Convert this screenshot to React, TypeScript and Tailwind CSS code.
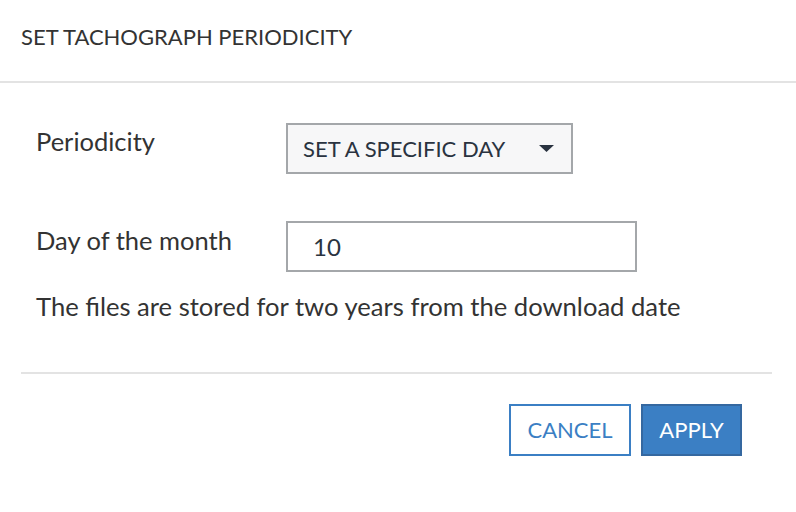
import React from "react";

export default function App() {
  return (
    <div className="w-[796px] h-[512px] bg-white text-[#333] overflow-hidden" style={{ fontFamily: "Lato, 'Open Sans', sans-serif" }}>
      <div className="h-[83px] flex items-center px-[21px] pb-[7px] border-b-2 border-[#e3e3e3]">
        <span className="text-[22px] text-[#333] leading-none">SET TACHOGRAPH PERIODICITY</span>
      </div>
      <div className="px-[21px]">
        <div className="pl-[15px] pt-[40px]">
          <div className="flex items-start">
            <div className="w-[250px] text-[25.5px] leading-[32px] text-[#333] pt-[2px]">Periodicity</div>
            <div className="w-[287px] h-[51px] border-2 border-[#a4a7aa] bg-[#f7f7f8] flex items-center justify-between pl-[15px] pr-[17px]">
              <span className="text-[22px] text-[#2a3340] leading-none">SET A SPECIFIC DAY</span>
              <svg width="15" height="7" viewBox="0 0 15 7"><path d="M0 0 L15 0 L7.5 7 Z" fill="#2a3340" /></svg>
            </div>
          </div>
          <div className="flex items-start mt-[47px]">
            <div className="w-[250px] text-[25.5px] leading-[32px] text-[#333] pt-[3px]">Day of the month</div>
            <div className="w-[351px] h-[51px] border-2 border-[#a4a7aa] bg-white flex items-center pl-[25px]">
              <span className="text-[24px] text-[#2a3340] leading-none">10</span>
            </div>
          </div>
          <div className="mt-[18px] text-[25.6px] leading-[32px] text-[#333]">The files are stored for two years from the download date</div>
        </div>
        <div className="mt-[50px] mr-[3px] border-t-2 border-[#e3e3e3]" />
        <div className="flex justify-end gap-[10px] pr-[33px] pt-[30px]">
          <button className="w-[122px] h-[52px] border-2 border-[#3b7fc4] bg-white text-[#3b7fc4] text-[22px] leading-none">CANCEL</button>
          <button className="w-[101px] h-[52px] border-2 border-[#3568a0] bg-[#3b7fc4] text-white text-[22px] leading-none">APPLY</button>
        </div>
      </div>
    </div>
  );
}
